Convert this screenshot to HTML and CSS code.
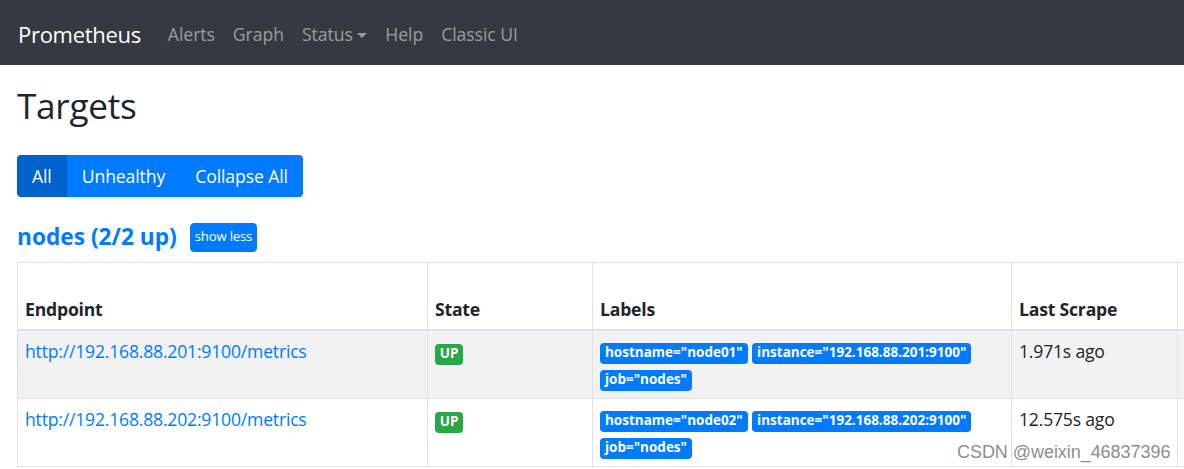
FILE: index.html
```html
<!DOCTYPE html>
<html lang="en">
<head>
<meta charset="utf-8">
<title>Prometheus Time Series Collection and Processing Server</title>
<link rel="stylesheet" href="styles.css">
</head>
<body>
<nav class="navbar">
  <a class="brand" href="#">Prometheus</a>
  <ul class="nav">
    <li><a class="nav-link" href="#">Alerts</a></li>
    <li><a class="nav-link" href="#">Graph</a></li>
    <li><a class="nav-link dropdown" href="#">Status<span class="caret"></span></a></li>
    <li><a class="nav-link" href="#">Help</a></li>
    <li><a class="nav-link" href="#">Classic UI</a></li>
  </ul>
</nav>
<main class="container">
  <h2 class="page-title">Targets</h2>
  <div class="btn-group">
    <button class="btn btn-active">All</button>
    <button class="btn">Unhealthy</button>
    <button class="btn">Collapse All</button>
  </div>
  <div class="pool-header">
    <a class="pool-link" href="#">nodes (2/2 up)</a>
    <button class="btn-xs">show less</button>
  </div>
  <div class="table-wrap">
    <table class="targets">
      <colgroup>
        <col class="c-endpoint"><col class="c-state"><col class="c-labels"><col class="c-scrape"><col class="c-duration"><col class="c-error">
      </colgroup>
      <thead>
        <tr>
          <th>Endpoint</th>
          <th>State</th>
          <th>Labels</th>
          <th>Last Scrape</th>
          <th></th>
          <th></th>
        </tr>
      </thead>
      <tbody>
        <tr class="striped">
          <td><a class="endpoint" href="#">http://192.168.88.201:9100/metrics</a></td>
          <td><span class="badge badge-up">UP</span></td>
          <td class="labels"><span class="badge badge-label">hostname="node01"</span> <span class="badge badge-label">instance="192.168.88.201:9100"</span> <span class="badge badge-label">job="nodes"</span></td>
          <td>1.971s ago</td>
          <td></td>
          <td></td>
        </tr>
        <tr>
          <td><a class="endpoint" href="#">http://192.168.88.202:9100/metrics</a></td>
          <td><span class="badge badge-up">UP</span></td>
          <td class="labels"><span class="badge badge-label">hostname="node02"</span> <span class="badge badge-label">instance="192.168.88.202:9100"</span> <span class="badge badge-label">job="nodes"</span></td>
          <td>12.575s ago</td>
          <td></td>
          <td></td>
        </tr>
      </tbody>
    </table>
  </div>
</main>
<div class="watermark">CSDN @weixin_46837396</div>
</body>
</html>
```
FILE: styles.css
```css
* { box-sizing: border-box; }
html, body { margin: 0; padding: 0; }
body {
  font-family: "Open Sans", "Noto Sans", sans-serif;
  font-size: 17.6px;
  line-height: 1.5;
  color: #212529;
  background: #fff;
  overflow: hidden;
  width: 1184px;
  height: 469px;
  position: relative;
}
a { text-decoration: none; }

.navbar {
  height: 65px;
  background: #343a40;
  display: flex;
  align-items: center;
  padding: 4px 17.6px 0 18px;
}
.brand {
  color: #fff;
  font-size: 22px;
  line-height: 1.5;
  margin-right: 18px;
  letter-spacing: -0.3px;
}
.nav {
  list-style: none;
  margin: 0;
  padding: 0;
  display: flex;
}
.nav-link {
  display: block;
  padding: 8.8px 9px;
  color: rgba(255,255,255,.5);
  letter-spacing: -0.05px;
}
.caret {
  display: inline-block;
  margin-left: 4.5px;
  vertical-align: 3.5px;
  border-top: 5.3px solid;
  border-left: 5.3px solid transparent;
  border-right: 5.3px solid transparent;
}

.container {
  padding: 19px 17px 0 17px;
}
.page-title {
  margin: 0 0 29px 0;
  font-size: 35.2px;
  font-weight: 500;
  line-height: 1.2;
  letter-spacing: -0.3px;
}

.btn-group {
  display: inline-flex;
  border-radius: 4.4px;
  overflow: hidden;
  vertical-align: top;
}
.btn {
  font-family: inherit;
  font-size: 17.6px;
  line-height: 1.5;
  padding: 6.6px 14px;
  border: 1px solid #007bff;
  background: #007bff;
  color: #fff;
  letter-spacing: -0.1px;
  cursor: pointer;
}
.btn-active {
  background: #0062cc;
  border-color: #005cbf;
}

.pool-header {
  display: flex;
  align-items: center;
  margin-top: 26px;
  height: 29px;
  margin-bottom: 10px;
}
.pool-link {
  color: #007bff;
  font-weight: 700;
  font-size: 22.7px;
  letter-spacing: 0;
  margin-right: 13px;
}
.btn-xs {
  font-family: inherit;
  font-size: 13.2px;
  line-height: 1.5;
  padding: 3.5px 4px;
  border: 1px solid #007bff;
  background: #007bff;
  color: #fff;
  border-radius: 4px;
  letter-spacing: -0.2px;
}

.table-wrap {
  width: 1400px;
}
.targets {
  border-collapse: collapse;
  table-layout: fixed;
  width: 1400px;
  border: 1px solid #dee2e6;
}
.c-endpoint { width: 410px; }
.c-state { width: 165px; }
.c-labels { width: 419px; }
.c-scrape { width: 166px; }
.c-duration { width: 120px; }
.c-error { width: 120px; }

.targets th, .targets td {
  border: 1px solid #dee2e6;
  padding: 7px 7px;
  text-align: left;
  letter-spacing: -0.2px;
}
.targets th {
  vertical-align: bottom;
  font-weight: 700;
  border-bottom: 2px solid #dee2e6;
  height: 68px;
  letter-spacing: -0.2px;
}
.targets td {
  vertical-align: top;
  height: 67px;
}
.targets td.labels {
  line-height: 27px;
  padding-top: 6px;
}
.striped td { background: #f2f2f2; }
.endpoint { color: #007bff; }

.badge {
  display: inline-block;
  font-size: 13.5px;
  font-weight: 700;
  line-height: 1;
  padding: 3.8px 5px;
  border-radius: 4px;
  color: #fff;
  white-space: nowrap;
  vertical-align: baseline;
  letter-spacing: 0;
}
.badge-up { background: #28a745; padding: 3.8px 4.8px; }
.badge-label { background: #007bff; }

.watermark {
  position: absolute;
  left: 957px;
  top: 439px;
  font-family: "Liberation Sans", Arial, sans-serif;
  font-size: 18px;
  color: #8e8e8e;
  text-shadow: 0 0 2px #fff;
  white-space: nowrap;
  letter-spacing: -0.05px;
}
```
